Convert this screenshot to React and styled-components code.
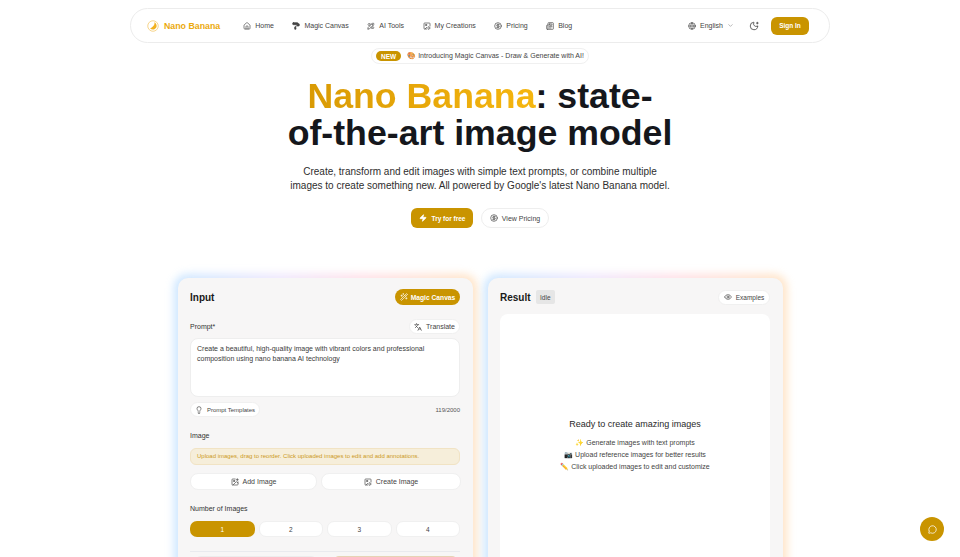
import styled, { createGlobalStyle } from "styled-components";
import {
	ChevronDown,
	CircleDollarSign,
	Eye,
	Globe,
	House,
	ImagePlay,
	ImagePlus,
	Languages,
	Lightbulb,
	MessageCircle,
	MoonStar,
	Newspaper,
	PaintRoller,
	Wand2,
	Zap,
} from "lucide-react";
import { TbTools } from "react-icons/tb";

const GOLD = "#c99400";

const GlobalStyle = createGlobalStyle`
	html, body {
		margin: 0;
		height: 100%;
		overflow: hidden;
		background: #fff;
	}
	body {
		font-family: "Liberation Sans", Arial, sans-serif;
		color: #171717;
	}
	* {
		box-sizing: border-box;
	}
`;

const Page = styled.div`
	display: flex;
	flex-direction: column;
	align-items: center;
	padding-top: 8px;
`;

const Nav = styled.nav`
	width: 700px;
	height: 35px;
	flex: none;
	display: flex;
	align-items: center;
	padding: 0 20px 0 16px;
	border: 1px solid #ececec;
	border-radius: 18px;
	background: #fff;
`;

const Brand = styled.div`
	display: flex;
	align-items: center;
	gap: 5px;
	margin-right: 23px;
	font-size: 8.8px;
	font-weight: 700;
	color: #eba90d;
`;

const NavLinks = styled.div`
	display: flex;
	align-items: center;
	gap: 18.5px;
	flex: 1;
`;

const NavLink = styled.a`
	display: flex;
	align-items: center;
	gap: 4px;
	font-size: 7px;
	color: #444;
`;

const NavRight = styled.div`
	display: flex;
	align-items: center;
`;

const Lang = styled.div`
	display: flex;
	align-items: center;
	gap: 4px;
	font-size: 7px;
	color: #444;
	margin-right: 15px;
`;

const SignIn = styled.button`
	margin-left: 12px;
	width: 38px;
	height: 18px;
	padding: 0;
	border: 0;
	border-radius: 6px;
	background: ${GOLD};
	color: #fff;
	font: 700 6.5px "Liberation Sans", Arial, sans-serif;
`;

const Announce = styled.div`
	display: flex;
	align-items: center;
	gap: 6px;
	height: 16px;
	margin-top: 5px;
	padding: 0 4px;
	border: 1px solid #f0f0f0;
	border-radius: 8px;
	font-size: 7px;
	color: #444;
`;

const NewTag = styled.span`
	padding: 1.5px 5px;
	border-radius: 7px;
	background: ${GOLD};
	color: #fff;
	font-size: 6.5px;
	font-weight: 700;
`;

const Title = styled.h1`
	margin: 14px 0 0;
	text-align: center;
	white-space: nowrap;
	font-size: 35.7px;
	line-height: 37px;
	font-weight: 700;
	color: #15171c;
`;

const TitleAccent = styled.span`
	background: linear-gradient(90deg, #d99a04, #f6b60f);
	-webkit-background-clip: text;
	background-clip: text;
	color: transparent;
`;

const Lead = styled.p`
	margin: 13px 0 0;
	text-align: center;
	font-size: 10px;
	line-height: 14px;
	color: #2e2e2e;
`;

const HeroActions = styled.div`
	display: flex;
	gap: 8px;
	margin-top: 15px;
`;

const PrimaryCta = styled.button`
	display: flex;
	align-items: center;
	justify-content: center;
	gap: 5px;
	width: 62px;
	height: 20px;
	padding: 0;
	border: 0;
	border-radius: 6px;
	background: ${GOLD};
	color: #fff;
	font: 700 6.5px "Liberation Sans", Arial, sans-serif;
`;

const SecondaryCta = styled.button`
	display: flex;
	align-items: center;
	justify-content: center;
	gap: 4px;
	width: 68px;
	height: 20px;
	padding: 0;
	border: 1px solid #eee;
	border-radius: 10px;
	background: #fff;
	color: #444;
	font: 7px "Liberation Sans", Arial, sans-serif;
`;

const Columns = styled.div`
	display: grid;
	grid-template-columns: 295px 295px;
	gap: 15px;
	margin-top: 50px;
	margin-left: 1px;
	isolation: isolate;
`;

const Card = styled.section`
	position: relative;
	height: 340px;
	padding: 11px 13px 12px 12px;
	border-radius: 10px;
	background: #f7f6f6;

	&::before {
		content: "";
		position: absolute;
		inset: -4px;
		z-index: -1;
		border-radius: 14px;
		background: linear-gradient(90deg, #a9d6ff, #e3d6fb 35%, #ffcbd8 62%, #ffd3a0);
		filter: blur(4px);
		opacity: 0.6;
	}
`;

const CardHead = styled.div`
	display: flex;
	align-items: center;
	justify-content: space-between;
	height: 16px;
`;

const CardTitleGroup = styled.div`
	display: flex;
	align-items: center;
	gap: 5px;
`;

const CardTitle = styled.h2`
	margin: 0;
	font-size: 10px;
	font-weight: 700;
	color: #1a1a1a;
`;

const Status = styled.span`
	padding: 3.5px 4.5px;
	border-radius: 2px;
	background: #e6e6e6;
	font-size: 6.5px;
	color: #444;
`;

const CanvasButton = styled.button`
	display: flex;
	align-items: center;
	justify-content: center;
	gap: 3px;
	width: 65px;
	height: 16px;
	padding: 0;
	border: 0;
	border-radius: 8px;
	background: ${GOLD};
	color: #fff;
	font: 700 6.7px "Liberation Sans", Arial, sans-serif;
`;

const FieldRow = styled.div`
	display: flex;
	align-items: center;
	justify-content: space-between;
	height: 15px;
	margin-top: 14px;
`;

const Label = styled.label`
	display: block;
	font-size: 7px;
	color: #333;
`;

const Chip = styled.button`
	display: flex;
	align-items: center;
	justify-content: center;
	gap: 4px;
	width: ${(p) => p.$width}px;
	height: 15px;
	padding: 0;
	border: 1px solid #f0f0f0;
	border-radius: 8px;
	background: #fff;
	color: #444;
	font: ${(p) => p.$size || 6.5}px "Liberation Sans", Arial, sans-serif;
`;

const PromptBox = styled.div`
	height: 59px;
	margin-top: 4px;
	padding: 5px 6px;
	border: 1px solid #eee;
	border-radius: 8px;
	background: #fff;
	font-size: 7px;
	line-height: 10px;
	color: #3a3a3a;
`;

const PromptFoot = styled.div`
	display: flex;
	align-items: center;
	justify-content: space-between;
	margin-top: 5px;
	font-size: 6px;
	color: #555;
`;

const ImageSection = styled.div`
	margin-top: 15px;
`;

const CountSection = styled.div`
	margin-top: 15px;
`;

const Notice = styled.div`
	height: 17px;
	margin-top: 9px;
	padding: 0 6px;
	border: 1px solid #f1e3c4;
	border-radius: 6px;
	background: #f6eeda;
	font-size: 6px;
	line-height: 15px;
	color: #cc9a1c;
`;

const UploadRow = styled.div`
	display: grid;
	grid-template-columns: 127px 140px;
	gap: 4px;
	margin-top: 8px;
`;

const UploadButton = styled.button`
	display: flex;
	align-items: center;
	justify-content: center;
	gap: 4px;
	height: 17px;
	padding: 0;
	border: 1px solid #f0f0f0;
	border-radius: 8px;
	background: #fff;
	color: #444;
	font: 7px "Liberation Sans", Arial, sans-serif;
`;

const CountRow = styled.div`
	display: grid;
	grid-template-columns: repeat(4, 1fr);
	gap: 4px;
	margin-top: 9px;
`;

const CountButton = styled.button`
	height: 16px;
	padding: 0;
	border: ${(p) => (p.$active ? "0" : "1px solid #f0f0f0")};
	border-radius: 7px;
	background: ${(p) => (p.$active ? GOLD : "#fff")};
	color: ${(p) => (p.$active ? "#fff" : "#444")};
	font: 6.5px "Liberation Sans", Arial, sans-serif;
`;

const Divider = styled.hr`
	height: 1px;
	margin: 14px 0 4px;
	border: 0;
	background: #e9eaee;
`;

const BottomRow = styled.div`
	display: grid;
	grid-template-columns: 122px 125px;
	gap: 16px;
	padding: 0 5px;
`;

const BottomSlot = styled.div`
	height: 16px;
	border: 1px solid ${(p) => (p.$accent ? "#e6d3b4" : "#ececec")};
	border-radius: 6px;
	background: ${(p) => (p.$accent ? "#e9d5b5" : "#fff")};
`;

const ResultPanel = styled.div`
	display: flex;
	flex-direction: column;
	align-items: center;
	height: 262px;
	margin-top: 9px;
	padding-top: 105px;
	border-radius: 8px;
	background: #fff;
`;

const ResultTitle = styled.div`
	font-size: 9px;
	color: #2a2a2a;
`;

const HintList = styled.div`
	display: flex;
	flex-direction: column;
	align-items: center;
	gap: 3px;
	margin-top: 9px;
	font-size: 7px;
	line-height: 9px;
	color: #444;
`;

const ChatBubble = styled.button`
	position: fixed;
	right: 16px;
	bottom: 16px;
	display: flex;
	align-items: center;
	justify-content: center;
	width: 24px;
	height: 24px;
	padding: 0;
	border: 0;
	border-radius: 50%;
	background: ${GOLD};
	color: #fff;
`;

const BananaLogo = () => (
	<svg width="12" height="12" viewBox="0 0 24 24" fill="none">
		<circle cx="12" cy="12" r="10.5" stroke="#f4c35a" strokeWidth="1.4" />
		<path d="M15 4c1 6-3 10-9 13 5 4 11 2 13-3 1-4-1-8-4-10z" fill="#f2b11f" />
	</svg>
);

const navItems = [
	{ label: "Home", Icon: House },
	{ label: "Magic Canvas", Icon: PaintRoller, fill: "currentColor" },
	{ label: "AI Tools", Icon: TbTools },
	{ label: "My Creations", Icon: ImagePlay },
	{ label: "Pricing", Icon: CircleDollarSign },
	{ label: "Blog", Icon: Newspaper },
];

const App = () => (
	<>
		<GlobalStyle />
		<Page>
			<Nav>
				<Brand>
					<BananaLogo />
					Nano Banana
				</Brand>
				<NavLinks>
					{navItems.map(({ label, Icon, fill = "none" }) => (
						<NavLink key={label}>
							<Icon size={8} fill={fill} />
							{label}
						</NavLink>
					))}
				</NavLinks>
				<NavRight>
					<Lang>
						<Globe size={8} />
						English
						<ChevronDown size={7} color="#888" />
					</Lang>
					<MoonStar size={10} color="#444" />
					<SignIn>Sign In</SignIn>
				</NavRight>
			</Nav>
			<Announce>
				<NewTag>NEW</NewTag>
				🎨 Introducing Magic Canvas - Draw &amp; Generate with AI!
			</Announce>
			<Title>
				<TitleAccent>Nano Banana</TitleAccent>: state-
				<br />
				of-the-art image model
			</Title>
			<Lead>
				Create, transform and edit images with simple text prompts, or combine multiple
				<br />
				images to create something new. All powered by Google's latest Nano Banana model.
			</Lead>
			<HeroActions>
				<PrimaryCta>
					<Zap size={8} fill="#fff" />
					Try for free
				</PrimaryCta>
				<SecondaryCta>
					<CircleDollarSign size={8} />
					View Pricing
				</SecondaryCta>
			</HeroActions>
			<Columns>
				<Card>
					<CardHead>
						<CardTitle>Input</CardTitle>
						<CanvasButton>
							<Wand2 size={8} />
							Magic Canvas
						</CanvasButton>
					</CardHead>
					<FieldRow>
						<Label>Prompt*</Label>
						<Chip $width={51} $size={7}>
							<Languages size={8} />
							Translate
						</Chip>
					</FieldRow>
					<PromptBox>
						Create a beautiful, high-quality image with vibrant colors and professional composition using nano banana AI technology
					</PromptBox>
					<PromptFoot>
						<Chip $width={70} $size={6}>
							<Lightbulb size={8} />
							Prompt Templates
						</Chip>
						119/2000
					</PromptFoot>
					<ImageSection>
						<Label>Image</Label>
						<Notice>Upload images, drag to reorder. Click uploaded images to edit and add annotations.</Notice>
						<UploadRow>
							<UploadButton>
								<ImagePlus size={8} />
								Add Image
							</UploadButton>
							<UploadButton>
								<ImagePlay size={8} />
								Create Image
							</UploadButton>
						</UploadRow>
					</ImageSection>
					<CountSection>
						<Label>Number of Images</Label>
						<CountRow>
							{[1, 2, 3, 4].map((n) => (
								<CountButton key={n} $active={n === 1}>
									{n}
								</CountButton>
							))}
						</CountRow>
					</CountSection>
					<Divider />
					<BottomRow>
						<BottomSlot />
						<BottomSlot $accent />
					</BottomRow>
				</Card>
				<Card>
					<CardHead>
						<CardTitleGroup>
							<CardTitle>Result</CardTitle>
							<Status>Idle</Status>
						</CardTitleGroup>
						<Chip $width={52}>
							<Eye size={8} />
							Examples
						</Chip>
					</CardHead>
					<ResultPanel>
						<ResultTitle>Ready to create amazing images</ResultTitle>
						<HintList>
							<span>✨ Generate images with text prompts</span>
							<span>📷 Upload reference images for better results</span>
							<span>✏️ Click uploaded images to edit and customize</span>
						</HintList>
					</ResultPanel>
				</Card>
			</Columns>
			<ChatBubble>
				<MessageCircle size={9} />
			</ChatBubble>
		</Page>
	</>
);

export default App;
